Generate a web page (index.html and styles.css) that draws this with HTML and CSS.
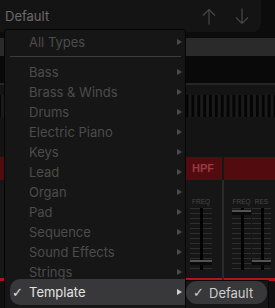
FILE: index.html
```html
<!DOCTYPE html>
<html lang="en">
<head>
    <meta charset="UTF-8">
    <meta name="viewport" content="width=device-width, initial-scale=1.0">
    <title>Preset Browser</title>
    <link rel="stylesheet" href="styles.css">
</head>
<body>
    <div class="plugin">
        <!-- Preset bar -->
        <header class="topbar">
            <div class="preset-box">
                <span class="preset-name">Default</span>
                <div class="nav">
                    <svg width="14" height="17" viewBox="0 0 14 17"><path d="M7 1.5V16.5M1 7.5L7 1.5L13 7.5" fill="none" stroke="#474747" stroke-width="1.2"/></svg>
                    <svg width="14" height="17" viewBox="0 0 14 17"><path d="M7 0.5V15.5M1 9.5L7 15.5L13 9.5" fill="none" stroke="#474747" stroke-width="1.2"/></svg>
                </div>
            </div>
        </header>

        <div class="band"></div>
        <div class="display"></div>

        <!-- Speaker grille -->
        <div class="grille-panel">
            <div class="grille"></div>
        </div>

        <!-- Filter section -->
        <div class="filters">
            <div class="filter-left"></div>
            <div class="filter-col">
                <div class="filter-head hpf">HPF</div>
                <div class="filter-body">
                    <div class="fader-group hpf-group">
                        <div class="fader">
                            <span class="fader-label">FREQ</span>
                            <div class="fader-scale"><div class="thumb thumb-low"></div></div>
                        </div>
                    </div>
                </div>
            </div>
            <div class="divider"></div>
            <div class="filter-col">
                <div class="filter-head"></div>
                <div class="filter-body">
                    <div class="fader-group lpf-group">
                        <div class="fader">
                            <span class="fader-label">FREQ</span>
                            <div class="fader-scale"><div class="thumb thumb-high"></div></div>
                        </div>
                        <div class="fader">
                            <span class="fader-label">RES</span>
                            <div class="fader-scale"><div class="thumb thumb-low"></div></div>
                        </div>
                    </div>
                </div>
            </div>
        </div>
        <div class="red-line"></div>
        <div class="bottom"></div>

        <!-- Type menu -->
        <div class="menu">
            <div class="menu-item">All Types<span class="arrow"></span></div>
            <div class="menu-sep"></div>
            <div class="menu-item">Bass<span class="arrow"></span></div>
            <div class="menu-item">Brass &amp; Winds<span class="arrow"></span></div>
            <div class="menu-item">Drums<span class="arrow"></span></div>
            <div class="menu-item">Electric Piano<span class="arrow"></span></div>
            <div class="menu-item">Keys<span class="arrow"></span></div>
            <div class="menu-item">Lead<span class="arrow"></span></div>
            <div class="menu-item">Organ<span class="arrow"></span></div>
            <div class="menu-item">Pad<span class="arrow"></span></div>
            <div class="menu-item">Sequence<span class="arrow"></span></div>
            <div class="menu-item">Sound Effects<span class="arrow"></span></div>
            <div class="menu-item">Strings<span class="arrow"></span></div>
            <div class="menu-item active"><span class="check">✓</span>Template<span class="arrow"></span></div>
        </div>

        <!-- Sub menu -->
        <div class="submenu">
            <div class="sub-item"><span class="check">✓</span>Default</div>
        </div>
    </div>
</body>
</html>
```

FILE: styles.css
```css
/* Reset */
* {
    margin: 0;
    padding: 0;
    box-sizing: border-box;
}

body {
    background-color: #0c0c0c;
    font-family: Inter, "Noto Sans", sans-serif;
}

.plugin {
    position: relative;
    width: 275px;
    height: 308px;
    overflow: hidden;
    background-color: #0c0c0c;
}

/* Preset bar */
.topbar {
    height: 38px;
    padding-bottom: 6px;
}

.preset-box {
    width: 261px;
    height: 32px;
    background-color: #141414;
    border-bottom-right-radius: 8px;
    display: flex;
    align-items: center;
    justify-content: space-between;
    padding: 0 12px 0 5px;
}

.preset-name {
    font-size: 13px;
    color: #6b6b6b;
}

.nav {
    display: flex;
    gap: 19px;
    padding-top: 1px;
}

.band {
    height: 18px;
    background-color: #2a2a2a;
}

.display {
    height: 29px;
    background-color: #090909;
    border-bottom: 2px solid #262626;
}

/* Grille */
.grille-panel {
    height: 72px;
    background-color: #141414;
    padding-top: 10px;
}

.grille {
    height: 22px;
    background-color: #1b1b1b;
    background-image: repeating-linear-gradient(90deg, #1b1b1b 0 3px, #050505 3px 6px);
    background-position: 1px 0;
    background-size: 5.86px 100%;
}

/* Filters */
.filters {
    display: grid;
    grid-template-columns: 187px 35px 2px 51px;
    height: 121px;
    background-color: #161616;
}

.filter-left {
    background: linear-gradient(#520c10 0 23px, #161616 23px);
}

.divider {
    background: linear-gradient(#161616 0 23px, #2a2a2a 23px);
}

.filter-head {
    height: 23px;
    background-color: #520c10;
}

.hpf {
    font-size: 11px;
    font-weight: bold;
    color: #9a3a3e;
    padding: 5px 0 0 5px;
    font-family: "Liberation Sans", Arial, sans-serif;
}

.filter-body {
    padding-top: 17px;
}

.fader-group {
    display: flex;
}

.hpf-group {
    padding-left: 3px;
}

.lpf-group {
    padding-left: 8px;
    gap: 1px;
}

.fader {
    display: flex;
    flex-direction: column;
    align-items: center;
    width: 22px;
}

.lpf-group .fader {
    width: 19px;
}

.fader-label {
    font-family: "Liberation Sans", Arial, sans-serif;
    font-size: 6.5px;
    color: #474747;
    height: 11px;
    padding-top: 1px;
}

.fader-scale {
    position: relative;
    width: 100%;
    height: 62px;
    background-image: repeating-linear-gradient(180deg, #2e2e2e 0 1px, transparent 1px 5px);
}

.fader-scale::before {
    content: "";
    position: absolute;
    left: calc(50% - 1px);
    top: 0;
    width: 3px;
    height: 62px;
    background-color: #030303;
}

.thumb {
    position: absolute;
    left: 0;
    width: 100%;
    height: 5px;
    background-color: #0a0a0a;
    border-top: 2px solid #535353;
}

.thumb-high {
    top: 2px;
}

.thumb-low {
    top: 52px;
}

.red-line {
    height: 3px;
    background: linear-gradient(90deg, #b51219 0 222px, #2a2a2a 222px 224px, #b51219 224px);
}

.bottom {
    height: 40px;
    background-color: #111;
}

/* Type menu */
.menu {
    position: absolute;
    left: 4px;
    top: 29px;
    width: 182px;
    height: 300px;
    background-color: #161616;
    border: 1px solid #050505;
    border-radius: 3px;
    padding-top: 2px;
}

.menu-item {
    display: flex;
    align-items: center;
    justify-content: space-between;
    height: 20px;
    padding: 0 3px 0 24px;
    font-size: 13px;
    color: #4c4c4c;
}

.arrow {
    width: 0;
    height: 0;
    border-top: 3.5px solid transparent;
    border-bottom: 3.5px solid transparent;
    border-left: 5px solid #4c4c4c;
}

.menu-sep {
    height: 1px;
    margin: 4px 4px 5px 5px;
    background-color: #3c3c3c;
}

.menu-item.active {
    position: relative;
    height: 26px;
    margin: -3px 0 -3px 5px;
    padding-left: 19px;
    background-color: #38383a;
    border-radius: 10px 0 0 10px;
    color: #e2e2e2;
}

.menu-item.active .arrow {
    border-left-color: #d0d0d0;
}

.check {
    position: absolute;
    font-family: "DejaVu Sans", sans-serif;
    font-size: 13px;
    color: #e2e2e2;
}

.menu-item.active .check {
    left: 2px;
}

/* Sub menu */
.submenu {
    position: absolute;
    left: 185px;
    top: 280px;
    width: 84px;
    height: 40px;
    background-color: #161616;
    border: 1px solid #050505;
}

.sub-item {
    position: relative;
    width: 81px;
    height: 23px;
    display: flex;
    align-items: center;
    padding-left: 23px;
    background-color: #38383a;
    border-radius: 11px;
    font-size: 13px;
    color: #cfcfcf;
}

.sub-item .check {
    left: 7px;
    color: #cfcfcf;
}
```
